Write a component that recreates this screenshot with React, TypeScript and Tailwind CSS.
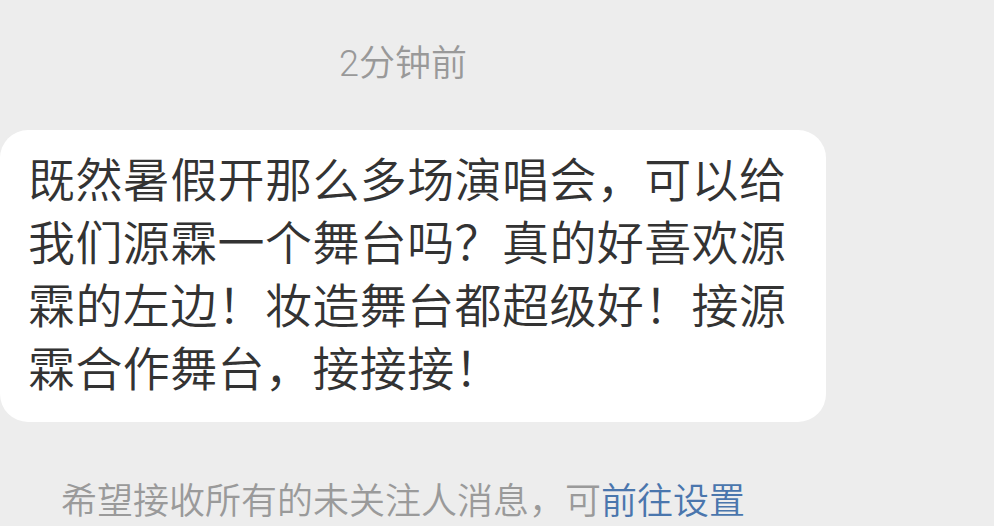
export default function App() {
  const font = { fontFamily: 'Roboto, "Noto Sans CJK SC", "Noto Sans", sans-serif' };

  return (
    <div className="min-h-screen w-[994px] h-[526px] overflow-hidden bg-[#ededed] font-[350]" style={font}>
      <div className="flex flex-col w-[806px]">
        {/* timestamp */}
        <div className="pt-[41px] h-[130px] text-center text-[36px] leading-[46px] text-[#999999]">
          2分钟前
        </div>

        {/* message bubble */}
        <div className="w-[826px] rounded-[28px] bg-white pl-[28px] pr-[26px] pt-[19px] pb-[21px] text-[47px] leading-[63px] tracking-[0.4px] text-[#333333]">
          既然暑假开那么多场演唱会，可以给我们源霖一个舞台吗？真的好喜欢源霖的左边！妆造舞台都超级好！接源霖合作舞台，接接接！
        </div>

        {/* hint */}
        <div className="mt-[57px] text-center text-[36px] leading-[46px] text-[#9a9a9a]">
          希望接收所有的未关注人消息，可<span className="text-[#4a76ad]">前往设置</span>
        </div>
      </div>
    </div>
  );
}
